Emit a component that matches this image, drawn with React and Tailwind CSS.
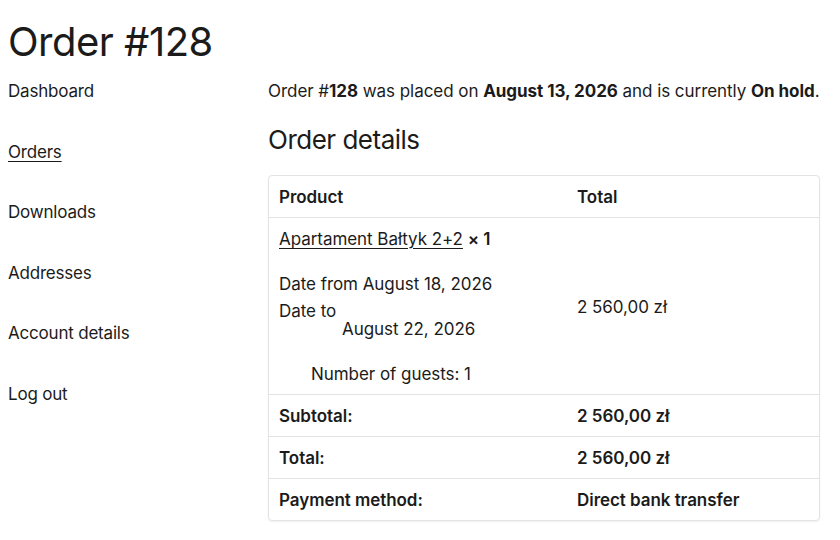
import React from "react";

const navItems = ["Dashboard", "Orders", "Downloads", "Addresses", "Account details", "Log out"];

const App = () => {
  return (
    <div
      className="min-h-screen bg-white text-[#1b1b1b] px-2 pt-[18px]"
      style={{ fontFamily: "Inter, 'Noto Sans', sans-serif" }}
    >
      <h1 className="text-[40px] leading-[48px] font-normal tracking-[-0.5px]">Order #128</h1>
      <div className="flex mt-[13px]">
        <nav className="w-[260px] shrink-0 flex flex-col gap-[36.6px] text-[17px] leading-[24px] tracking-[-0.2px]">
          {navItems.map((item) => (
            <a key={item} className={item === "Orders" ? "underline underline-offset-[3px]" : ""}>
              {item}
            </a>
          ))}
        </nav>
        <main className="w-[552px] text-[17px] leading-[24px] tracking-[-0.05px]">
          <p>
            Order #<b className="font-bold">128</b> was placed on{" "}
            <b className="font-bold">August 13, 2026</b> and is currently{" "}
            <b className="font-bold">On hold</b>.
          </p>
          <h2 className="text-[26px] leading-[32px] mt-[21px] tracking-[-0.5px]">Order details</h2>
          <div className="mt-[19px] border border-[#e3e3e3] rounded-[4px] shadow-[0_1px_2px_rgba(0,0,0,0.06)]">
            <div className="grid grid-cols-[298px_1fr] h-[42px] items-center border-b border-[#e3e3e3] font-semibold px-[10px]">
              <span>Product</span>
              <span>Total</span>
            </div>
            <div className="grid grid-cols-[298px_1fr] items-center border-b border-[#e3e3e3] px-[10px] pt-[9px] pb-[8px]">
              <div>
                <div>
                  <a className="underline underline-offset-[3px]">Apartament Bałtyk 2+2</a>{" "}
                  <span className="font-semibold">× 1</span>
                </div>
                <div className="mt-[21px]">Date from August 18, 2026</div>
                <div className="mt-[3px]">Date to</div>
                <div className="pl-[63px] -mt-[6px]">August 22, 2026</div>
                <div className="pl-[32px] mt-[21px]">Number of guests: 1</div>
              </div>
              <div>2 560,00 zł</div>
            </div>
            <div className="grid grid-cols-[298px_1fr] h-[42px] items-center border-b border-[#e3e3e3] font-semibold px-[10px]">
              <span>Subtotal:</span>
              <span>2 560,00 zł</span>
            </div>
            <div className="grid grid-cols-[298px_1fr] h-[42px] items-center border-b border-[#e3e3e3] font-semibold px-[10px]">
              <span>Total:</span>
              <span>2 560,00 zł</span>
            </div>
            <div className="grid grid-cols-[298px_1fr] h-[41px] items-center font-semibold px-[10px]">
              <span>Payment method:</span>
              <span>Direct bank transfer</span>
            </div>
          </div>
        </main>
      </div>
    </div>
  );
};

export default App;
